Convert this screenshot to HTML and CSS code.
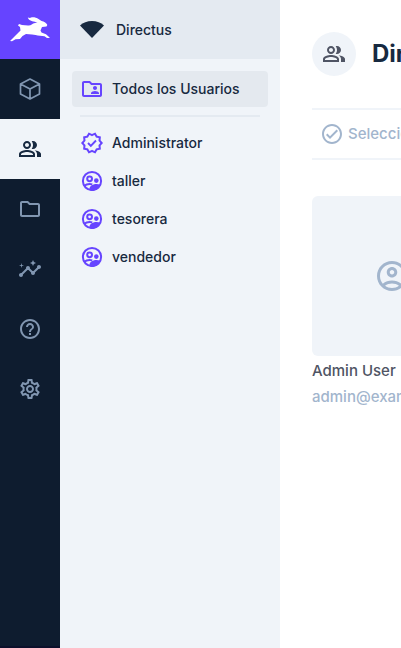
FILE: index.html
```html
<!DOCTYPE html>
<html lang="es">
<head>
<meta charset="utf-8">
<meta name="viewport" content="width=device-width, initial-scale=1">
<title>Directus</title>
<link rel="stylesheet" href="styles.css">
</head>
<body>
<svg class="sprite" aria-hidden="true">
  <symbol id="people" viewBox="0 0 24 24"><path d="M16.67 13.13C18.04 14.06 19 15.32 19 17v3h4v-3c0-2.18-3.57-3.47-6.33-3.87zM15 12c2.21 0 4-1.79 4-4s-1.79-4-4-4c-.47 0-.91.1-1.33.24C14.5 5.27 15 6.58 15 8s-.5 2.73-1.33 3.76c.42.14.86.24 1.33.24zM9 12c2.21 0 4-1.79 4-4s-1.79-4-4-4-4 1.79-4 4 1.79 4 4 4zm0-6c1.1 0 2 .9 2 2s-.9 2-2 2-2-.9-2-2 .9-2 2-2zM9 13c-2.67 0-8 1.34-8 4v3h16v-3c0-2.66-5.33-4-8-4zm6 5H3v-.99C3.2 16.29 6.3 15 9 15s5.8 1.29 6 2v1z"/></symbol>
  <symbol id="supervised" viewBox="0 0 24 24"><g fill="none" stroke="currentColor" stroke-width="2"><circle cx="12" cy="12" r="9.1"/><circle cx="9.6" cy="9.8" r="2.4"/><path d="M4 17c1.6-1.3 3.6-2 5.600-2 .9 0 1.800.1 2.700.4" stroke-width="1.900"/></g><circle cx="16.300" cy="11.600" r="2.300"/><path d="M9.500 21.200c-.2-1.700.1-3.200 1.500-4.400 1.600-1.200 3.600-1.700 5.400-1.700 1.300 0 2.700.2 4.100.6-1.500 3.800-4.800 6.300-8.500 6.300-.9 0-1.700-.2-2.500-.8z"/></symbol>
</svg>
<div class="app">
  <nav class="modules" aria-label="Módulos">
    <a class="logo" href="#" aria-label="Directus">
      <svg viewBox="0 0 60 59"><path d="M10 41 16 35 20.500 30.500 20 27 18 25.500 19 24 22 25 28 25.500C31 26 32 23.500 35 23L37.500 22.500C34 21.500 30 21 28.500 19L27.800 17.500 30 18C31 17 36 17 38.500 19L41.500 21C44 21.300 47 23.500 47.300 25L46.500 26.500 42 27 40.500 30.500 41.500 32.500 46 34.300 48.500 36.500 50 38 47 38 44.500 36.200 40 35.700C36.500 35.500 34.500 34.500 32 34.500L26 34 22.500 36 20 39 15.500 39.200 12 41.200Z" fill="#fff"/></svg>
    </a>
    <a href="#" aria-label="Contenido"><svg class="icon" viewBox="0 0 24 24"><path d="M12 2 21.500 7V17L12 22 2.500 17V7ZM2.500 7 12 12 21.500 7M12 12V22" fill="none" stroke="currentColor" stroke-width="1.700" stroke-linejoin="round"/></svg></a>
    <a class="active" href="#" aria-label="Usuarios"><svg class="icon"><use href="#people"/></svg></a>
    <a href="#" aria-label="Archivos"><svg class="icon" viewBox="0 0 24 24"><path d="M9.170 6l2 2H20v10H4V6h5.170M10 4H4c-1.100 0-1.990.9-1.990 2L2 18c0 1.100.9 2 2 2h16c1.100 0 2-.9 2-2V8c0-1.100-.9-2-2-2h-8l-2-2z"/></svg></a>
    <a href="#" aria-label="Estadísticas"><svg class="icon" viewBox="0 0 24 24"><path d="M21 8c-1.450 0-2.260 1.440-1.930 2.510l-3.550 3.560c-.3-.09-.74-.09-1.040 0l-2.550-2.550C12.270 10.450 11.460 9 10 9c-1.450 0-2.270 1.440-1.930 2.520l-4.560 4.550C2.440 15.740 1 16.550 1 18c0 1.100.9 2 2 2 1.450 0 2.260-1.440 1.930-2.510l4.550-4.560c.3.09.74.09 1.040 0l2.550 2.550C12.730 16.550 13.540 18 15 18c1.450 0 2.270-1.440 1.930-2.520l3.560-3.550c1.070.33 2.510-.48 2.510-1.930 0-1.100-.9-2-2-2zM15 9l.94-2.070L18 6l-2.060-.93L15 3l-.92 2.070L12 6l2.080.93zM3.500 11L4 9l2-.5L4 8l-.5-2L3 8l-2 .5L3 9z"/></svg></a>
    <a href="#" aria-label="Ayuda"><svg class="icon" viewBox="0 0 24 24"><path d="M11 18h2v-2h-2v2zm1-16C6.480 2 2 6.480 2 12s4.480 10 10 10 10-4.480 10-10S17.520 2 12 2zm0 18c-4.410 0-8-3.590-8-8s3.590-8 8-8 8 3.590 8 8-3.590 8-8 8zm0-14c-2.210 0-4 1.790-4 4h2c0-1.100.9-2 2-2s2 .9 2 2c0 2-3 1.750-3 5h2c0-2.250 3-2.500 3-5 0-2.210-1.790-4-4-4z"/></svg></a>
    <a href="#" aria-label="Ajustes"><svg class="icon" viewBox="0 0 24 24"><path d="M19.430 12.980c.04-.32.07-.64.07-.98 0-.34-.03-.66-.07-.98l2.110-1.650c.19-.15.24-.42.12-.64l-2-3.460c-.09-.16-.26-.25-.44-.25-.06 0-.12.01-.17.03l-2.490 1c-.52-.4-1.080-.73-1.690-.98l-.38-2.650C14.460 2.180 14.250 2 14 2h-4c-.25 0-.46.18-.49.42l-.38 2.650c-.61.25-1.170.59-1.690.98l-2.490-1c-.06-.02-.12-.03-.18-.03-.17 0-.34.09-.43.25l-2 3.460c-.13.22-.07.49.12.64l2.110 1.650c-.04.32-.07.65-.07.98 0 .33.03.66.07.98l-2.110 1.650c-.19.15-.24.42-.12.64l2 3.460c.09.16.26.25.44.25.06 0 .12-.01.17-.03l2.490-1c.52.4 1.080.73 1.690.98l.38 2.650c.03.24.24.42.49.42h4c.25 0 .46-.18.49-.42l.38-2.650c.61-.25 1.170-.59 1.690-.98l2.490 1c.06.02.12.03.18.03.17 0 .34-.09.43-.25l2-3.460c.12-.22.07-.49-.12-.64l-2.110-1.650zm-1.980-1.710c.04.31.05.52.05.73 0 .21-.02.43-.05.73l-.14 1.130.89.7 1.080.84-.7 1.210-1.270-.51-1.040-.42-.9.68c-.43.32-.84.56-1.250.73l-1.060.43-.16 1.130-.2 1.350h-1.400l-.19-1.350-.16-1.130-1.060-.43c-.43-.18-.83-.41-1.230-.71l-.91-.7-1.060.43-1.270.51-.7-1.210 1.080-.84.89-.7-.14-1.130c-.03-.31-.05-.54-.05-.74s.02-.43.05-.73l.14-1.130-.89-.7-1.080-.84.7-1.210 1.270.51 1.040.42.9-.68c.43-.32.84-.56 1.250-.73l1.060-.43.16-1.130.2-1.350h1.390l.19 1.350.16 1.130 1.060.43c.43.18.83.41 1.230.71l.91.7 1.060-.43 1.270-.51.7 1.210-1.070.85-.89.7.14 1.130zM12 8c-2.210 0-4 1.790-4 4s1.790 4 4 4 4-1.790 4-4-1.790-4-4-4zm0 6c-1.100 0-2-.9-2-2s.9-2 2-2 2 .9 2 2-.9 2-2 2z"/></svg></a>
  </nav>

  <aside class="sidebar">
    <header class="project">
      <svg class="icon" viewBox="0 0 24 24"><path d="M0 7.500C3 4.500 7.200 3 12 3S21 4.500 24 7.500L12 20Z"/></svg>
      <span>Directus</span>
    </header>
    <nav class="roles" aria-label="Roles">
      <a class="selected" href="#"><svg class="icon" viewBox="0 0 24 24"><path d="M20 6h-8l-2-2H4c-1.100 0-1.990.9-1.990 2L2 18c0 1.100.9 2 2 2h16c1.100 0 2-.9 2-2V8c0-1.100-.9-2-2-2zm0 12H4V6h5.170l2 2H20v10zm-5-5c1.100 0 2-.9 2-2s-.9-2-2-2-2 .9-2 2 .9 2 2 2zm-4 4h8v-1c0-1.330-2.670-2-4-2s-4 .67-4 2v1z"/></svg>Todos los Usuarios</a>
      <hr>
      <a href="#"><svg class="icon" viewBox="0 0 24 24"><path d="M23 11.990l-2.440-2.790.34-3.690-3.610-.82-1.890-3.200L12 2.950 8.600 1.500 6.710 4.690 3.100 5.500l.34 3.700L1 11.990l2.440 2.790-.34 3.700 3.610.82L8.600 22.500l3.400-1.470 3.400 1.460 1.890-3.190 3.610-.82-.34-3.690L23 11.990zm-3.950 1.480l-.56.65.08.85.18 1.950-1.900.43-.84.19-.44.74-.99 1.680-1.780-.77-.8-.34-.79.34-1.780.77-.99-1.670-.44-.74-.84-.19-1.900-.43.18-1.960.08-.85-.56-.65L3.670 12l1.290-1.480.56-.65-.09-.86-.18-1.940 1.900-.43.84-.19.44-.74.99-1.680 1.780.77.8.34.79-.34 1.780-.77.99 1.680.44.74.84.19 1.900.43-.18 1.950-.08.85.56.65 1.290 1.470-1.280 1.480z"/><path d="m8 12 2.800 2.800L16 9.500" fill="none" stroke="currentColor" stroke-width="1.900"/></svg>Administrator</a>
      <a href="#"><svg class="icon"><use href="#supervised"/></svg>taller</a>
      <a href="#"><svg class="icon"><use href="#supervised"/></svg>tesorera</a>
      <a href="#"><svg class="icon"><use href="#supervised"/></svg>vendedor</a>
    </nav>
  </aside>

  <main class="content">
    <header class="title-bar">
      <span class="badge"><svg class="icon"><use href="#people"/></svg></span>
      <h1>Directorio de Usuarios</h1>
    </header>
    <div class="toolbar">
      <button type="button"><svg class="icon" viewBox="0 0 24 24"><path d="M12 2C6.480 2 2 6.480 2 12s4.480 10 10 10 10-4.480 10-10S17.520 2 12 2zm0 18c-4.410 0-8-3.590-8-8s3.590-8 8-8 8 3.590 8 8-3.590 8-8 8zm4.590-12.420L10 14.170l-2.590-2.580L6 13l4 4 8-8z"/></svg>Seleccionar Todo</button>
    </div>
    <article class="card">
      <div class="photo"><svg class="icon-large" viewBox="0 0 24 24"><path d="M12 2C6.480 2 2 6.480 2 12s4.480 10 10 10 10-4.480 10-10S17.520 2 12 2zM7.350 18.500C8.660 17.560 10.260 17 12 17s3.340.56 4.650 1.500c-1.310.94-2.910 1.500-4.650 1.500s-3.340-.56-4.650-1.500zm10.790-1.380C16.450 15.800 14.320 15 12 15s-4.450.8-6.140 2.120C4.700 15.730 4 13.950 4 12c0-4.420 3.580-8 8-8s8 3.580 8 8c0 1.950-.7 3.730-1.860 5.120zM12 6c-1.930 0-3.500 1.570-3.500 3.500S10.070 13 12 13s3.500-1.570 3.500-3.500S13.930 6 12 6zm0 5c-.83 0-1.500-.67-1.500-1.500S11.170 8 12 8s1.500.67 1.500 1.500S12.830 11 12 11z"/></svg></div>
      <div class="name">Admin User</div>
      <div class="email">admin@example.com</div>
    </article>
  </main>
</div>
</body>
</html>
```
FILE: styles.css
```css
* {
  box-sizing: border-box;
}

body {
  margin: 0;
  font-family: Inter, "Liberation Sans", sans-serif;
  font-size: 14px;
  font-weight: 500;
  line-height: 22px;
  color: #172940;
  background: #fff;
}

a {
  color: inherit;
  text-decoration: none;
}

.sprite {
  position: absolute;
  width: 0;
  height: 0;
}

.icon {
  display: block;
  flex: none;
  width: 24px;
  height: 24px;
  fill: currentColor;
}

.app {
  display: flex;
  min-height: 100vh;
  overflow: hidden;
}

.modules {
  flex: none;
  width: 60px;
  background: #0e1c2f;
  border-bottom: 2px solid #0c102b;
  color: #8196b1;
}

.modules a {
  display: flex;
  align-items: center;
  justify-content: center;
  height: 60px;
}

.modules .logo {
  height: 59px;
  background: #6644ff;
}

.logo svg {
  width: 100%;
  height: 100%;
}

.modules .active {
  background: #f0f4f9;
  color: #172940;
}

.sidebar {
  flex: none;
  width: 220px;
  background: #f0f4f9;
}

.project {
  display: flex;
  align-items: center;
  gap: 12px;
  height: 59px;
  padding: 0 20px;
  background: #e4eaf1;
}

.roles {
  display: flex;
  flex-direction: column;
  gap: 2px;
  padding: 12px;
}

.roles a {
  display: flex;
  align-items: center;
  gap: 8px;
  height: 36px;
  padding: 0 8px;
  border-radius: 4px;
}

.roles .icon {
  color: #6644ff;
}

.roles .selected {
  background: #e4e9ef;
}

.roles hr {
  align-self: stretch;
  height: 2px;
  margin: 6px 8px;
  border: 0;
  background: #e4eaf1;
}

.content {
  flex: 1;
  min-width: 0;
  padding: 32px 0 32px 32px;
  overflow: hidden;
  font-size: 15px;
  white-space: nowrap;
}

.title-bar {
  display: flex;
  align-items: center;
  gap: 16px;
  margin-bottom: 32px;
}

.badge {
  display: flex;
  flex: none;
  align-items: center;
  justify-content: center;
  width: 44px;
  height: 44px;
  border-radius: 50%;
  background: #f0f4f9;
  color: #4f5464;
}

h1 {
  margin: 0;
  font-size: 24px;
  font-weight: 700;
  line-height: 32px;
}

.toolbar {
  display: flex;
  align-items: center;
  height: 52px;
  margin-bottom: 36px;
  padding: 0 8px;
  border-top: 2px solid #f0f4f9;
  border-bottom: 2px solid #f0f4f9;
}

.toolbar button {
  display: flex;
  align-items: center;
  gap: 4px;
  padding: 0;
  border: 0;
  background: none;
  color: #a2b5cd;
  font: inherit;
}

.card {
  width: 160px;
  line-height: 26px;
}

.photo {
  display: flex;
  align-items: center;
  justify-content: center;
  aspect-ratio: 1;
  margin-bottom: 2px;
  border-radius: 6px;
  background: #f0f4f9;
}

.icon-large {
  width: 36px;
  height: 36px;
  fill: #a2b5cd;
}

.name {
  color: #4f5464;
}

.email {
  color: #a2b5cd;
}
```
